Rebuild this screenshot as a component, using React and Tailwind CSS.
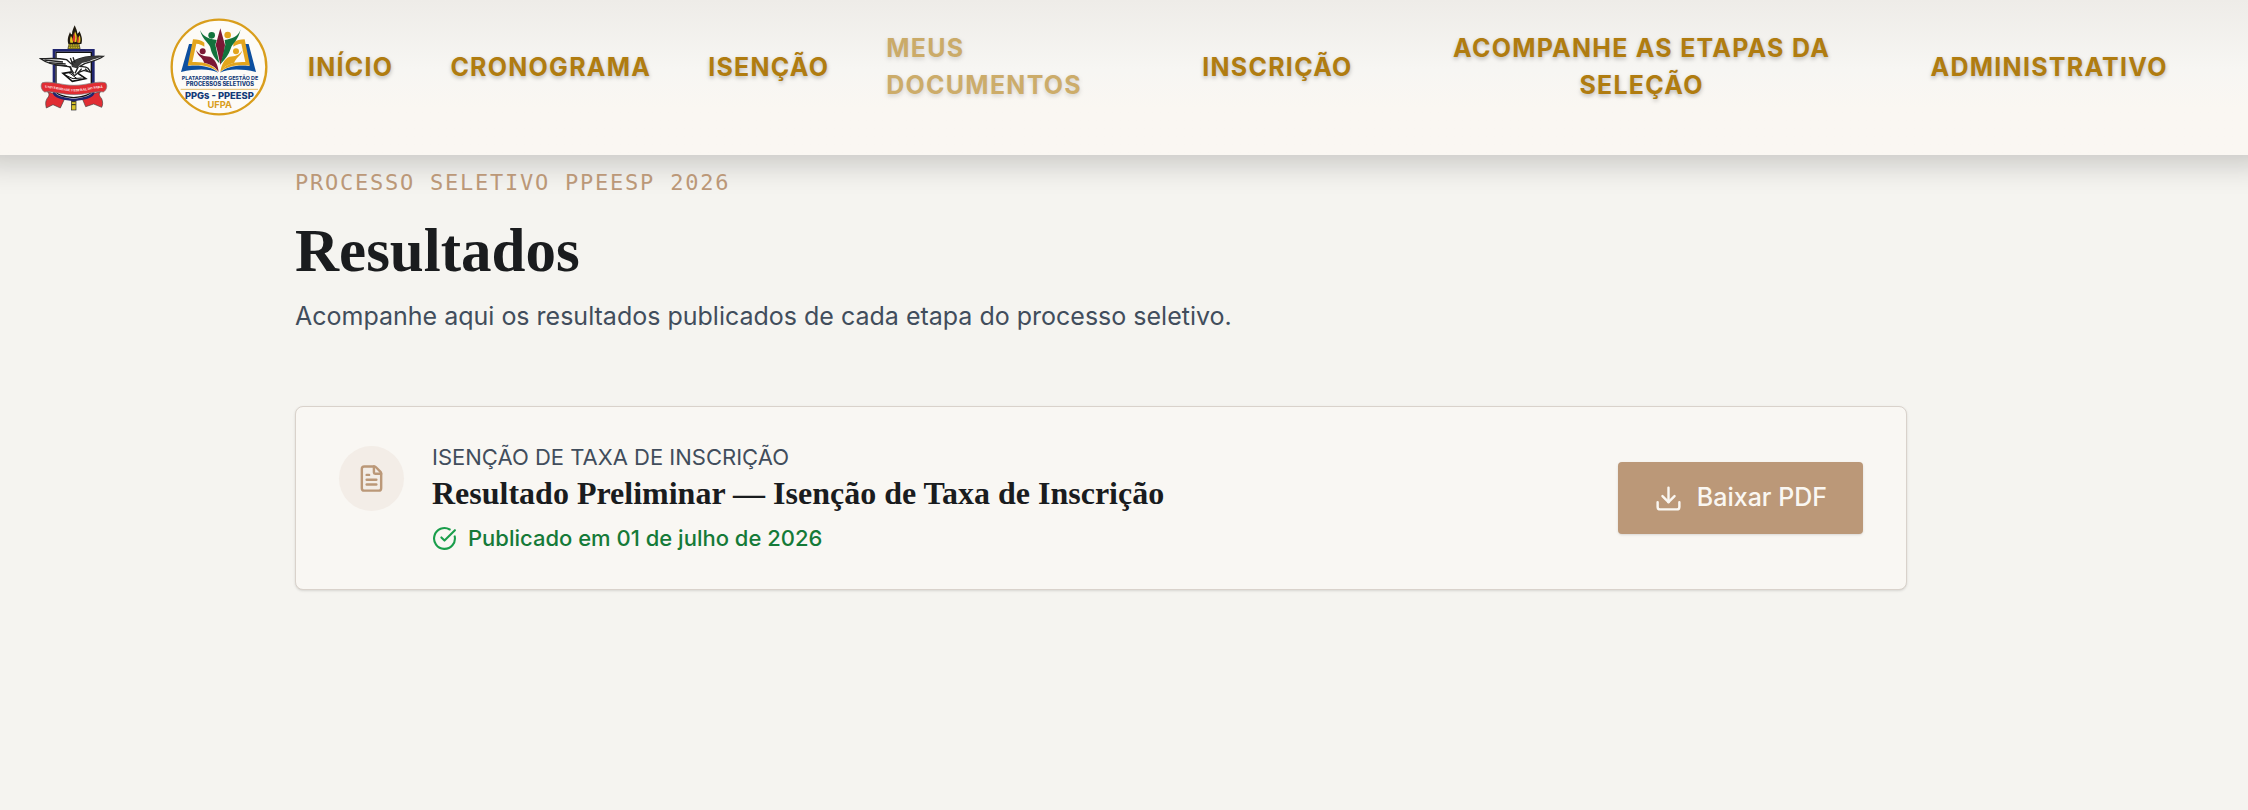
import React from "react";
import { FileText, CircleCheckBig, Download } from "lucide-react";

function UniversityCrest() {
  return (
    <svg viewBox="56 44 210 264" className="mt-0.5 h-22 w-[70px] shrink-0" role="img" aria-label="Universidade Federal do Pará">
      <rect x="153" y="268" width="14" height="34" fill="#d9c42a" stroke="#222" strokeWidth="2" />
      <path d="M154 277h12M154 286h12" stroke="#222" strokeWidth="3" />
      <path d="M146 104h30l4 18h-38z" fill="#7d741c" stroke="#222" strokeWidth="2" />
      <path d="M144 104c-4-14 0-24 5-36 2 6 4 7 6 7 0-10 4-18 8-27 4 9 8 17 8 25 3-1 5-4 6-8 6 12 11 26 6 39z" fill="#201a10" />
      <path d="M150 100c-2-8 0-15 2-20 4 6 6 10 6 20zM162 98c-2-12-1-20 2-32 5 10 7 18 4 32zM172 100c0-10 2-16 6-22 3 8 3 16 1 22z" fill="#e8c91f" />
      <path d="M156 92l5-22 4 14-3 16zM170 98l2-18 4 8-2 12z" fill="#d8322a" />
      <path d="M144 107h34M145 114h34" stroke="#d9c42a" strokeWidth="3" strokeDasharray="4 3" />
      <path d="M80 246c8 8 8 12 0 22-6 10-4 18-2 28l20-10 22 10 14-30zM242 246c-8 8-6 12 2 22 4 10 4 18 0 26l-24-10-24 8-12-28z" fill="#e12d33" stroke="#444" strokeWidth="2" />
      <path d="M101 123h118v124c0 16-26 21-59 25-33-4-59-9-59-25z" fill="#fff" stroke="#20256f" strokeWidth="8" />
      <path d="M107 129h106v116c0 12-24 17-53 20-29-3-53-8-53-20z" fill="none" stroke="#111" strokeWidth="4" />
      <path d="M128 192l36-6 32 22-40 8z" fill="#fff" stroke="#111" strokeWidth="5" />
      <path d="M136 198l22 10 26-2M146 190l24 18" fill="none" stroke="#111" strokeWidth="3" />
      <path d="M61 148c20 0 50-3 78 3l13 12c16-16 46-24 97-22-12 10-34 16-56 22l-14 8c8 2 16 0 24 6l8 12-20-6-16 6-12 10-10-10-2-16-22-4c-30-2-50-8-68-21z" fill="#fff" stroke="#222" strokeWidth="4" />
      <path d="M152 163c16-16 46-24 97-22-14 6-32 8-42 15l-22 5-16 16-14-4z" fill="#3b3b3b" />
      <path d="M72 152l56 6M86 160l50 4M104 167l36 3M150 146l8 20M158 144l6 16M174 172l-10 20M184 178l-12 14M148 172l12 20M194 178l8 8" stroke="#222" strokeWidth="4" />
      <path d="M66 220c28-6 56 8 95 8s66-14 94-8c8 8 4 22-6 28-26-4-50 8-88 8s-62-12-88-8c-10-6-14-20-7-28z" fill="#e12d33" stroke="#777" strokeWidth="2" />
      <path id="crest-ribbon" d="M66 236c28-3 56 10 95 10s68-13 94-10" fill="none" />
      <text fontFamily="Liberation Serif, serif" fontSize="10" fontWeight="700" fill="#fff">
        <textPath href="#crest-ribbon" startOffset="50%" textAnchor="middle">UNIVERSIDADE FEDERAL DO PARÁ</textPath>
      </text>
    </svg>
  );
}

function PlatformSeal() {
  return (
    <svg viewBox="28 22 294 294" className="size-[98px] shrink-0" role="img" aria-label="Plataforma de Gestão de Processos Seletivos">
      <circle cx="175" cy="169" r="142" fill="#fdfbf7" stroke="#d99e1c" strokeWidth="7" />
      <path d="M85 100h12l-14 66c32-4 66 0 90 20-26-12-66-12-112-2z" fill="#0d4f9f" />
      <path d="M264 100h-12l14 66c-32-4-66 0-88 20 26-12 64-12 108-2z" fill="#0d4f9f" />
      <path d="M97 86c14 0 24 3 34 10v12c-8-6-14-8-24-9l-12 55c32-2 62 6 78 30-24-18-50-22-92-19z" fill="#e3a51d" />
      <path d="M252 86c-14 0-24 3-34 10v12c8-6 14-8 24-9l12 55c-32-2-60 6-76 30 24-18 50-22 90-19z" fill="#e3a51d" />
      <path d="M179 53l14 50c-2 20-6 40-14 60-4-20-8-42-14-60z" fill="#7b1835" />
      <path d="M118 58c10 22 28 26 50 30l-4 14 12 56c-14-16-22-26-26-44-2-16-24-24-32-56z" fill="#12733c" />
      <path d="M240 56c-8 24-26 28-48 32l2 14-14 58c14-16 24-28 30-46 6-18 22-22 30-58z" fill="#12733c" />
      <path d="M106 118c10 16 26 20 42 20 16 8 24 24 26 46-12-18-26-24-44-28-2-14-18-18-24-38z" fill="#7b1835" />
      <path d="M246 118c-10 16-24 20-40 20-16 8-24 24-27 46 12-18 26-24 42-28 4-14 18-18 25-38z" fill="#e3a51d" />
      <circle cx="153" cy="74" r="10" fill="#12733c" />
      <circle cx="201" cy="73" r="10" fill="#e3a51d" />
      <circle cx="126" cy="122" r="9" fill="#7b1835" />
      <circle cx="226" cy="122" r="9" fill="#e3a51d" />
      <g fontFamily="Inter, sans-serif" textAnchor="middle" fill="#123a78">
        <text x="178" y="208" fontSize="16" fontWeight="700">PLATAFORMA DE GESTÃO DE</text>
        <text x="178" y="227" fontSize="17" fontWeight="800">PROCESSOS SELETIVOS</text>
        <text x="176" y="264" fontSize="28" fontWeight="800">PPGs - PPEESP</text>
        <text x="177" y="293" fontSize="28" fontWeight="700" fill="#d99e1c">UFPA</text>
      </g>
      <path d="M60 236h232" stroke="#d99e1c" strokeWidth="2" />
    </svg>
  );
}

const navItems = [
  { label: "INÍCIO", className: "shrink-0" },
  { label: "CRONOGRAMA", className: "shrink-0" },
  { label: "ISENÇÃO", className: "shrink-0" },
  { label: "MEUS DOCUMENTOS", className: "basis-[259px] opacity-60" },
  { label: "INSCRIÇÃO", className: "shrink-0" },
  { label: "ACOMPANHE AS ETAPAS DA SELEÇÃO", className: "basis-[464px] text-center" },
  { label: "ADMINISTRATIVO", className: "shrink-0" },
];

function Header() {
  return (
    <header className="relative flex items-center bg-linear-to-b from-[#eeece8] via-[#f7f6f3] via-45% to-[#faf7f2] to-70% pt-[18px] pb-[39px] pl-[39px] shadow-[0_-16px_30px_24px_rgba(0,0,0,0.2)]">
      <UniversityCrest />
      <div className="ml-[61px]">
        <PlatformSeal />
      </div>
      <nav aria-label="Principal" className="ml-10 flex min-w-0 flex-1 items-center gap-[57px] pr-[72px] font-[Inter,sans-serif] text-[25px] leading-[37px] font-bold tracking-wider text-[#b07c10] text-shadow-[0_2px_4px_rgba(0,0,0,0.25)]">
        {navItems.map((item) => (
          <a key={item.label} href="#" className={item.className}>
            {item.label}
          </a>
        ))}
      </nav>
    </header>
  );
}

export default function App() {
  return (
    <div className="min-h-screen overflow-x-clip bg-[#f5f4f0] font-[Inter,sans-serif] text-[#1a1c1e]">
      <Header />
      <main className="relative pt-3 pr-[46px] pb-20">
        <div className="mx-auto max-w-[1612px]">
          <p className="font-['DejaVu_Sans_Mono',monospace] text-[22px] leading-8 tracking-[0.08em] text-[#bb9878]">
            PROCESSO SELETIVO PPEESP 2026
          </p>
          <h1 className="mt-4 font-['Liberation_Serif',serif] text-[61px] leading-[72px] font-bold">Resultados</h1>
          <p className="mt-2 text-[25px] leading-[42px] text-[#414d5c]">
            Acompanhe aqui os resultados publicados de cada etapa do processo seletivo.
          </p>

          <article className="mt-[69px] flex items-center justify-between gap-8 rounded-lg border border-[#d9d2cb] bg-[#f9f7f3] px-[43px] py-[35px] shadow-sm">
            <div className="flex items-start gap-7">
              <span className="mt-1 flex size-[65px] shrink-0 items-center justify-center rounded-full bg-[#f3ede7] text-[#bb9878]">
                <FileText size={29} strokeWidth={2} />
              </span>
              <div>
                <p className="text-[22px] leading-[30px] text-[#414d5c]">ISENÇÃO DE TAXA DE INSCRIÇÃO</p>
                <h2 className="font-['Liberation_Serif',serif] text-[32px] leading-[42px] font-bold">
                  Resultado Preliminar — Isenção de Taxa de Inscrição
                </h2>
                <p className="mt-2 flex items-center gap-[11px] text-[22px] leading-8 font-medium text-[#157a38]">
                  <CircleCheckBig size={25} strokeWidth={2} className="text-[#1a9e4b]" />
                  Publicado em 01 de julho de 2026
                </p>
              </div>
            </div>
            <button type="button" className="flex h-[72px] shrink-0 items-center gap-3.5 rounded-sm bg-[#bb9878] px-9 text-[25px] font-medium text-[#faf7f2] shadow-sm">
              <Download size={29} strokeWidth={2} />
              Baixar PDF
            </button>
          </article>
        </div>
      </main>
    </div>
  );
}
